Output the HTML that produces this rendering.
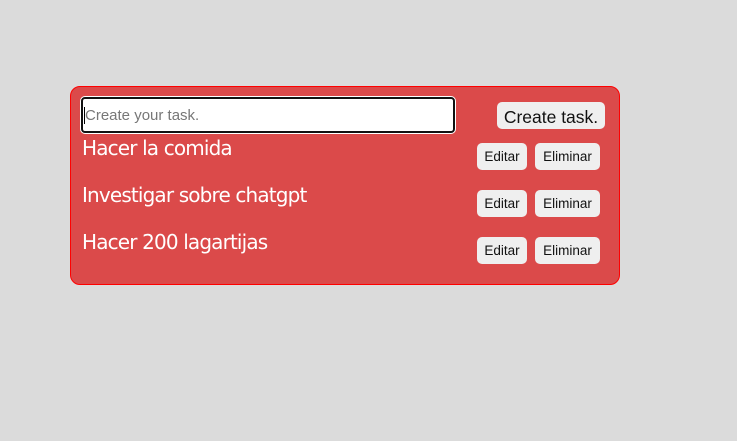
<!DOCTYPE html>
<html><head><style>
body{margin:0;width:737px;height:441px;background:#dbdbdb;font-family:"Liberation Sans",sans-serif;position:relative;overflow:hidden}
.card{position:absolute;left:70px;top:86px;width:548px;height:197px;background:#db4a4a;border:1px solid #f00;border-radius:10px}
.inp{position:absolute;left:81px;top:97px;width:370px;height:32px;background:#fff;border:2px solid #111;border-radius:4px;box-shadow:0 0 0 1px #fff}
.inp span{position:absolute;left:1px;top:8px;font-size:15px;color:#777;border-left:1px solid #000;padding-left:0px;line-height:17px}
.ct{position:absolute;left:497px;top:102px;width:108px;height:27px;background:#efefef;border-radius:5px;font-size:17.5px;line-height:30px;text-align:center;color:#111}
.t{position:absolute;left:82px;color:#fff;font-size:20px;font-family:"DejaVu Sans","Liberation Sans",sans-serif;letter-spacing:-0.85px}
.b{position:absolute;height:27px;background:#efefef;border-radius:5px;font-size:13.5px;line-height:28px;text-align:center;color:#111}
.e{left:477px;width:50px}.l{left:535px;width:65px}
</style></head><body>
<div class="card"></div>
<div class="inp"><span>Create your task.</span></div>
<div class="ct">Create task.</div>
<div class="t" style="top:136px">Hacer la comida</div>
<div class="t" style="top:183px">Investigar sobre chatgpt</div>
<div class="t" style="top:230px">Hacer 200 lagartijas</div>
<div class="b e" style="top:143px">Editar</div><div class="b l" style="top:143px">Eliminar</div>
<div class="b e" style="top:190px">Editar</div><div class="b l" style="top:190px">Eliminar</div>
<div class="b e" style="top:237px">Editar</div><div class="b l" style="top:237px">Eliminar</div>
</body></html>
